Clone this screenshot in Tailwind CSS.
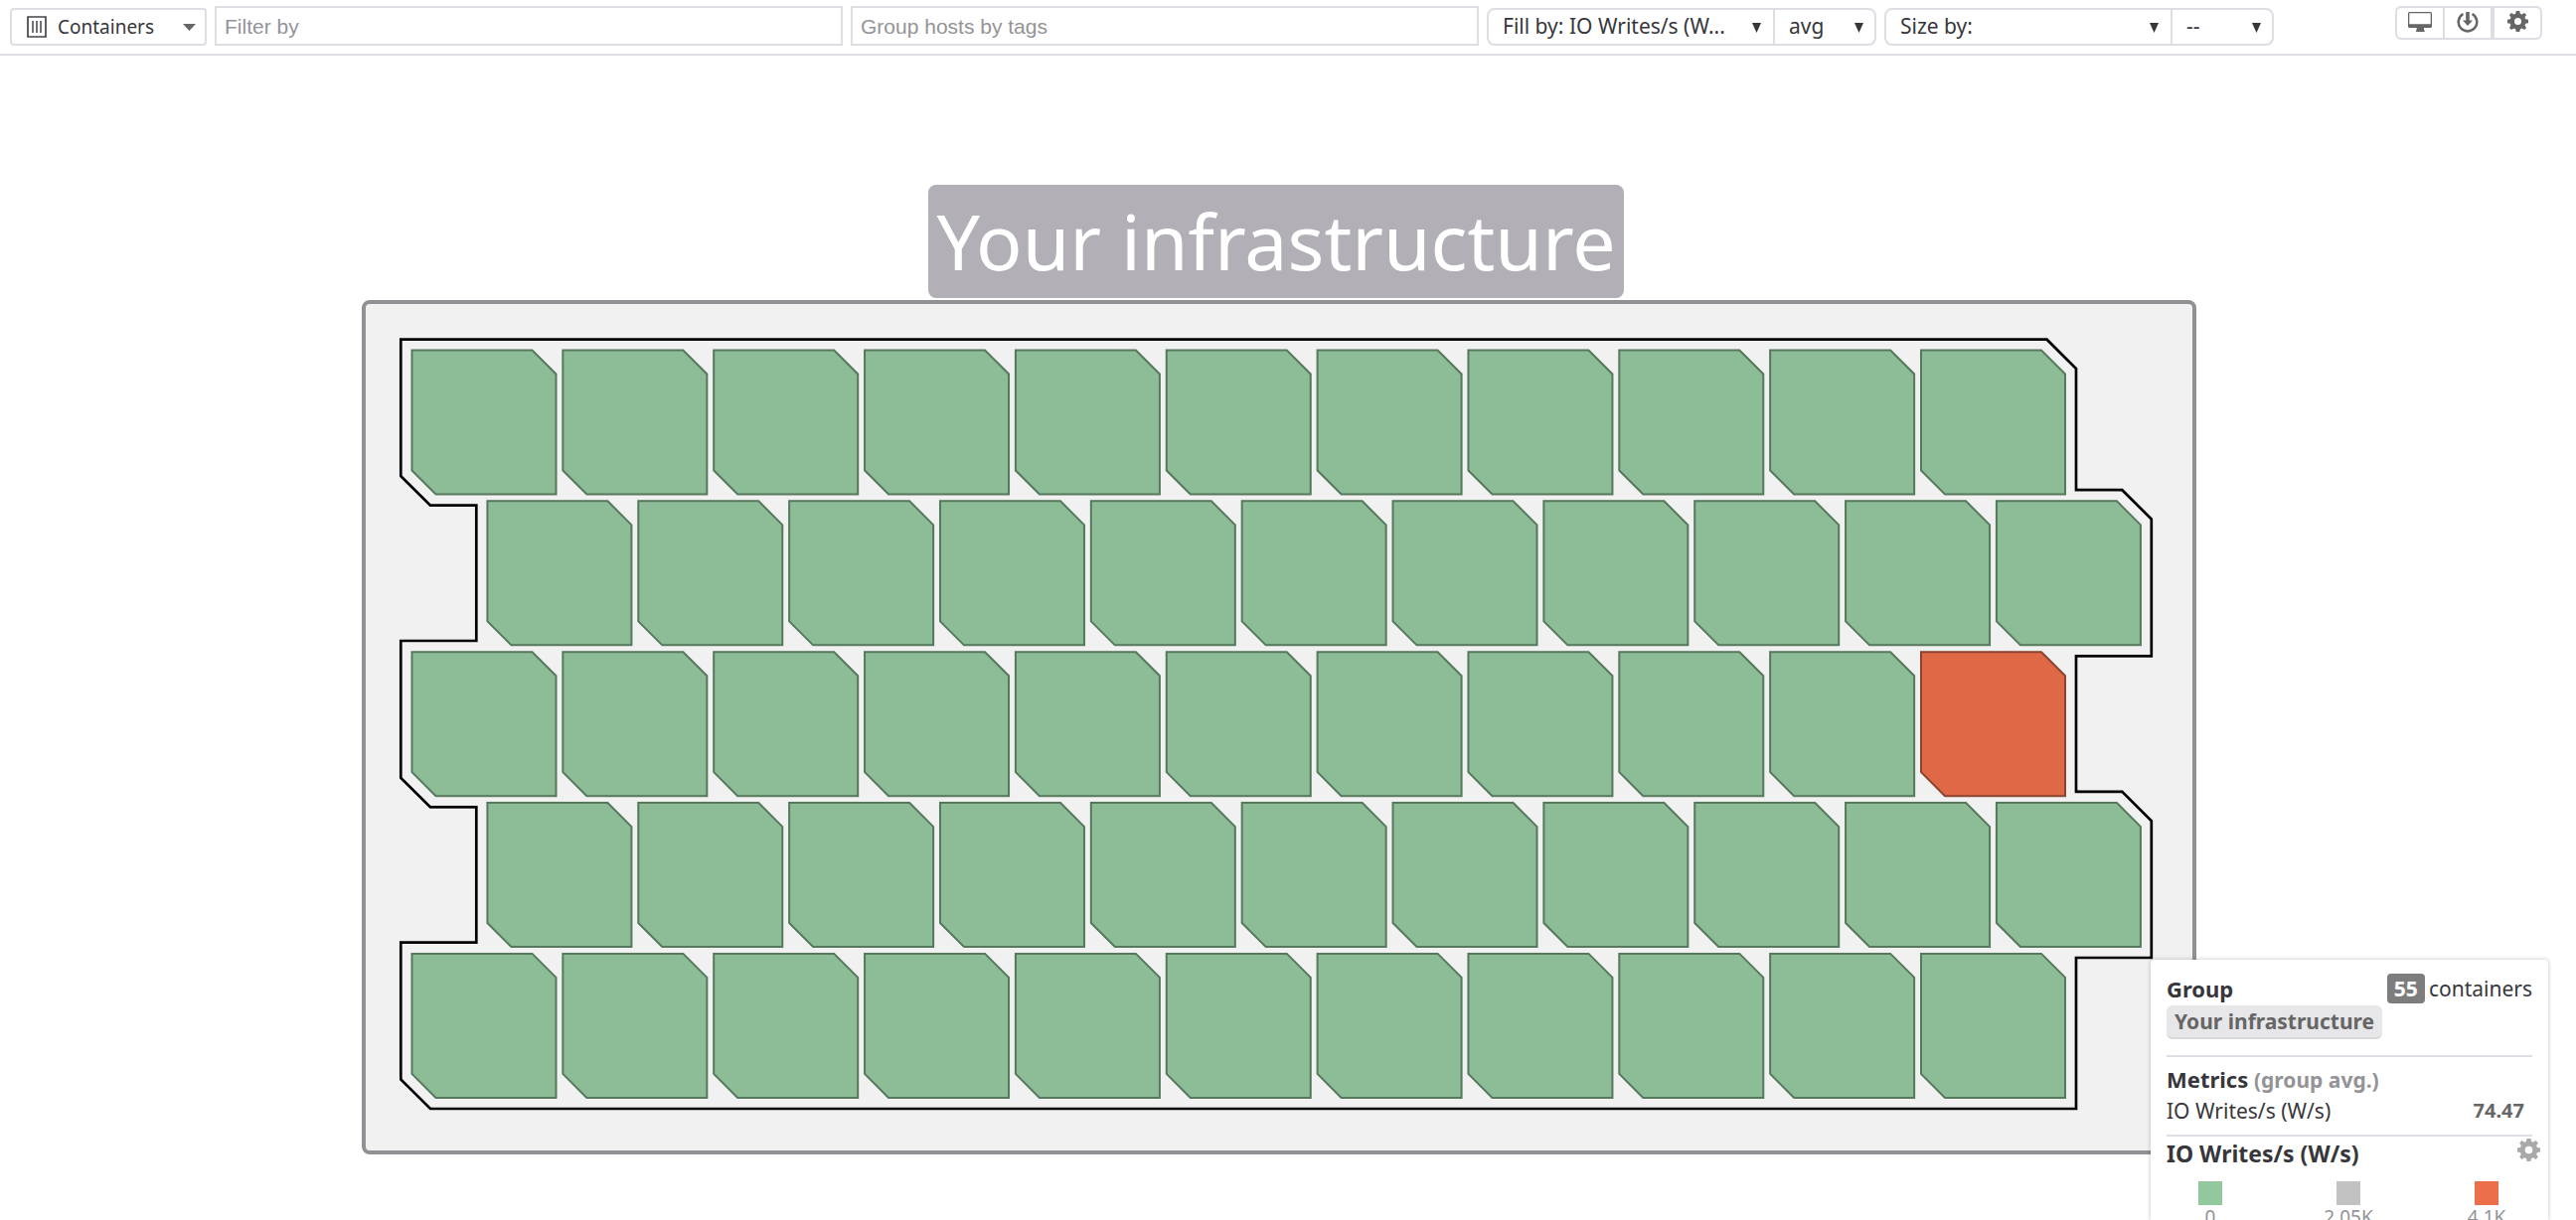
<!DOCTYPE html>
<html lang="en">
<head>
<meta charset="utf-8">
<title>Your infrastructure</title>
<script src="https://cdn.jsdelivr.net/npm/@tailwindcss/browser@4"></script>
</head>
<body class="relative h-screen overflow-hidden bg-white font-['Noto_Sans',sans-serif] text-[21px] leading-7 text-[#37363b]">
<svg class="hidden" aria-hidden="true">
  <symbol id="gear" viewBox="0 0 24 24">
    <path fill="currentColor" fill-rule="evenodd" d="M10 0h4l.7 3.200 1.900.8 2.800-1.800 2.400 2.400L20 7.400l.8 1.900L24 10v4l-3.200.700-.8 1.900 1.800 2.800-2.400 2.400-2.800-1.800-1.900.8L14 24h-4l-.7-3.200-1.900-.8-2.800 1.800-2.400-2.400L4 16.600l-.8-1.900L0 14v-4l3.200-.700L4 7.400 2.200 4.600l2.400-2.400L7.400 4l1.900-.8zM12 8a4 4 0 1 0 0 8 4 4 0 0 0 0-8z"/>
  </symbol>
  <symbol id="caret" viewBox="0 0 10 10" preserveAspectRatio="none"><path fill="currentColor" d="M0 0h10L5 10z"/></symbol>
</svg>

<header class="flex h-14 items-start gap-2 border-b-2 border-[#dddde3] pt-[6px] pr-[34px] pl-[10px]">
  <button type="button" class="mt-0.5 flex h-[38px] w-[198px] shrink-0 items-center rounded-sm border-2 border-[#dddde3] pr-[9px] pl-[15px] text-[19px]">
    <svg class="mr-[11px] h-[22px] w-5" viewBox="0 0 20 22" fill="none" stroke="#444449"><path stroke-width="1.700" d="M1 1h18v20H1z"/><path stroke-width="1.500" d="M6 5v12M10 5v12M14 5v12"/></svg>
    <span>Containers</span>
    <svg class="ml-auto h-[7px] w-[13px] text-[#666]" aria-hidden="true"><use href="#caret"/></svg>
  </button>
  <input type="text" aria-label="Filter by" placeholder="Filter by" class="h-10 min-w-0 flex-1 border-2 border-[#dddde3] px-2 pt-0.5 font-['Liberation_Sans',sans-serif] text-[21px] placeholder:text-[#949397]">
  <input type="text" aria-label="Group hosts by tags" placeholder="Group hosts by tags" class="h-10 min-w-0 flex-1 border-2 border-[#dddde3] px-2 pt-0.5 font-['Liberation_Sans',sans-serif] text-[21px] placeholder:text-[#949397]">
  <div class="mt-0.5 flex h-[38px] w-[392px] shrink-0 rounded-lg border-2 border-[#dddde3]">
    <div class="relative w-[288px] border-r-2 border-[#dddde3]">
      <select aria-label="Fill by" class="h-full w-full appearance-none pb-0.5 pl-[14px]"><option>Fill by: IO Writes/s (W...</option></select>
      <svg class="pointer-events-none absolute top-[13px] right-3 h-[10px] w-[9px]"><use href="#caret"/></svg>
    </div>
    <div class="relative flex-1">
      <select aria-label="Fill aggregation" class="h-full w-full appearance-none pb-0.5 pl-[14px]"><option>avg</option></select>
      <svg class="pointer-events-none absolute top-[13px] right-[11px] h-[10px] w-[9px]"><use href="#caret"/></svg>
    </div>
  </div>
  <div class="mt-0.5 flex h-[38px] w-[392px] shrink-0 rounded-lg border-2 border-[#dddde3]">
    <div class="relative w-[288px] border-r-2 border-[#dddde3]">
      <select aria-label="Size by" class="h-full w-full appearance-none pb-0.5 pl-[14px]"><option>Size by:</option></select>
      <svg class="pointer-events-none absolute top-[13px] right-3 h-[10px] w-[9px]"><use href="#caret"/></svg>
    </div>
    <div class="relative flex-1">
      <select aria-label="Size aggregation" class="h-full w-full appearance-none pb-0.5 pl-[14px]"><option>--</option></select>
      <svg class="pointer-events-none absolute top-[13px] right-[11px] h-[10px] w-[9px]"><use href="#caret"/></svg>
    </div>
  </div>
  <div class="ml-[114px] flex h-[34px] w-[148px] shrink-0 rounded-md border-2 border-[#dddde3] text-[#666]">
    <button type="button" aria-label="Full screen" class="flex flex-1 justify-center border-r-2 border-[#dddde3] pt-[3px]">
      <svg class="h-[22px] w-6" viewBox="0 0 24 22"><path fill="currentColor" fill-rule="evenodd" d="M1.500 1h21A1.500 1.500 0 0 1 24 2.500v13a1.500 1.500 0 0 1-1.500 1.500H16v2.500h.7V21H8v-1.500h.7V17H1.500A1.500 1.500 0 0 1 0 15.500v-13A1.500 1.500 0 0 1 1.500 1zM1.300 2.200v11h21.400v-11z"/></svg>
    </button>
    <button type="button" aria-label="Download" class="flex flex-1 justify-center border-r-2 border-[#dddde3] pt-[3px]">
      <svg class="h-[22px] w-[22px]" viewBox="0 0 22 22"><path fill="none" stroke="currentColor" stroke-width="2.500" d="M6.500 3A9.300 9.300 0 1 0 15.500 3"/><path fill="currentColor" d="M9.200 1h3.600v8.500H16L11 15 6 9.500h3.200z"/></svg>
    </button>
    <button type="button" aria-label="Settings" class="flex flex-1 justify-center border-l-2 border-[#dddde3] pt-[3px]">
      <svg class="h-[21px] w-[21px]"><use href="#gear"/></svg>
    </button>
  </div>
</header>

<main class="pt-[130px] pr-[18px]">
  <div class="mb-0.5 flex justify-center pr-[6px]">
    <h1 class="flex h-[114px] items-center rounded-lg bg-[#b2b0b6] px-2 pb-0.5 text-[77px] leading-none text-white">Your infrastructure</h1>
  </div>
  <div class="mx-auto w-full max-w-[1846px] rounded-lg border-4 border-[#919094] bg-[#f1f1f1]">
    <svg id="hostmap" class="block w-full" viewBox="368 306 1838 852" role="img" aria-label="Container map">
      <path fill="none" stroke="#000" stroke-width="2.700" d="M403.300 341.700H2059.600L2089 371V493.200H2135.300L2164.800 522.500V660.300H2089V796.900H2135.300L2164.800 826.200V964H2089V1116H433L403.300 1086.500V948.700H479.300V812.400H433L403.300 783V645H479.300V508.700H433L403.300 479.300Z"/>
    </svg>
  </div>
</main>

<aside class="absolute right-7 bottom-0 h-[262px] w-[400px] overflow-hidden rounded-t-sm bg-white px-4 shadow-[0_0_4px_rgba(0,0,0,0.25)]">
  <div class="flex justify-between pt-[14px]">
    <h2 class="text-[22px] leading-[30px] font-bold">Group</h2>
    <p class="flex h-[30px] items-center gap-1"><span class="flex h-[30px] items-center rounded bg-[#7d7d7d] px-[7px] font-bold text-white">55</span>containers</p>
  </div>
  <div class="mt-0.5 flex"><span class="flex h-[34px] items-center rounded-md border-b-2 border-[#d8d8db] bg-[#e7e7e9] px-2 font-bold text-[#666]">Your infrastructure</span></div>
  <hr class="mt-4 border-t-2 border-[#dddde3]">
  <h2 class="mt-2 text-[22px] font-bold">Metrics <span class="text-[21px] text-[#949397]">(group avg.)</span></h2>
  <p class="mt-[3px] flex justify-between pr-2"><span>IO Writes/s (W/s)</span><b class="text-[20px] text-[#666]">74.47</b></p>
  <hr class="mt-[10px] border-t-2 border-[#dddde3]">
  <div class="-mr-2 flex items-start justify-between">
    <h2 class="mt-[3px] text-[23px] font-bold">IO Writes/s (W/s)</h2>
    <button type="button" aria-label="Legend settings" class="pt-0.5 text-[#a9a9a9]"><svg class="h-[23px] w-[23px]"><use href="#gear"/></svg></button>
  </div>
  <ul class="mt-[14px] flex justify-between pr-4 pl-[14px] text-[19px] leading-6 text-[#949397]">
    <li class="flex w-[60px] flex-col items-center"><span class="h-6 w-6 bg-[#93c79d]"></span>0</li>
    <li class="flex w-[60px] flex-col items-center"><span class="h-6 w-6 bg-[#c2c2c2]"></span>2.05K</li>
    <li class="flex w-[60px] flex-col items-center"><span class="h-6 w-6 bg-[#ec6f4c]"></span>4.1K</li>
  </ul>
</aside>

<script>
  const map = document.getElementById('hostmap');
  const pitch = 151.85;
  for (let row = 0; row < 5; row++) {
    for (let col = 0; col < 11; col++) {
      const busy = row === 2 && col === 10;
      const tile = document.createElementNS('http://www.w3.org/2000/svg', 'path');
      const x = 414.5 + col * pitch + (row % 2) * pitch / 2;
      const y = 352.5 + row * pitch;
      tile.setAttribute('d', 'M0 0H121L145 24V145H24L0 121Z');
      tile.setAttribute('transform', `translate(${x} ${y})`);
      tile.setAttribute('fill', busy ? '#df6947' : '#8dbd96');
      tile.setAttribute('stroke', busy ? '#8c4430' : '#56785d');
      tile.setAttribute('stroke-width', '2');
      map.appendChild(tile);
    }
  }
</script>
</body>
</html>
